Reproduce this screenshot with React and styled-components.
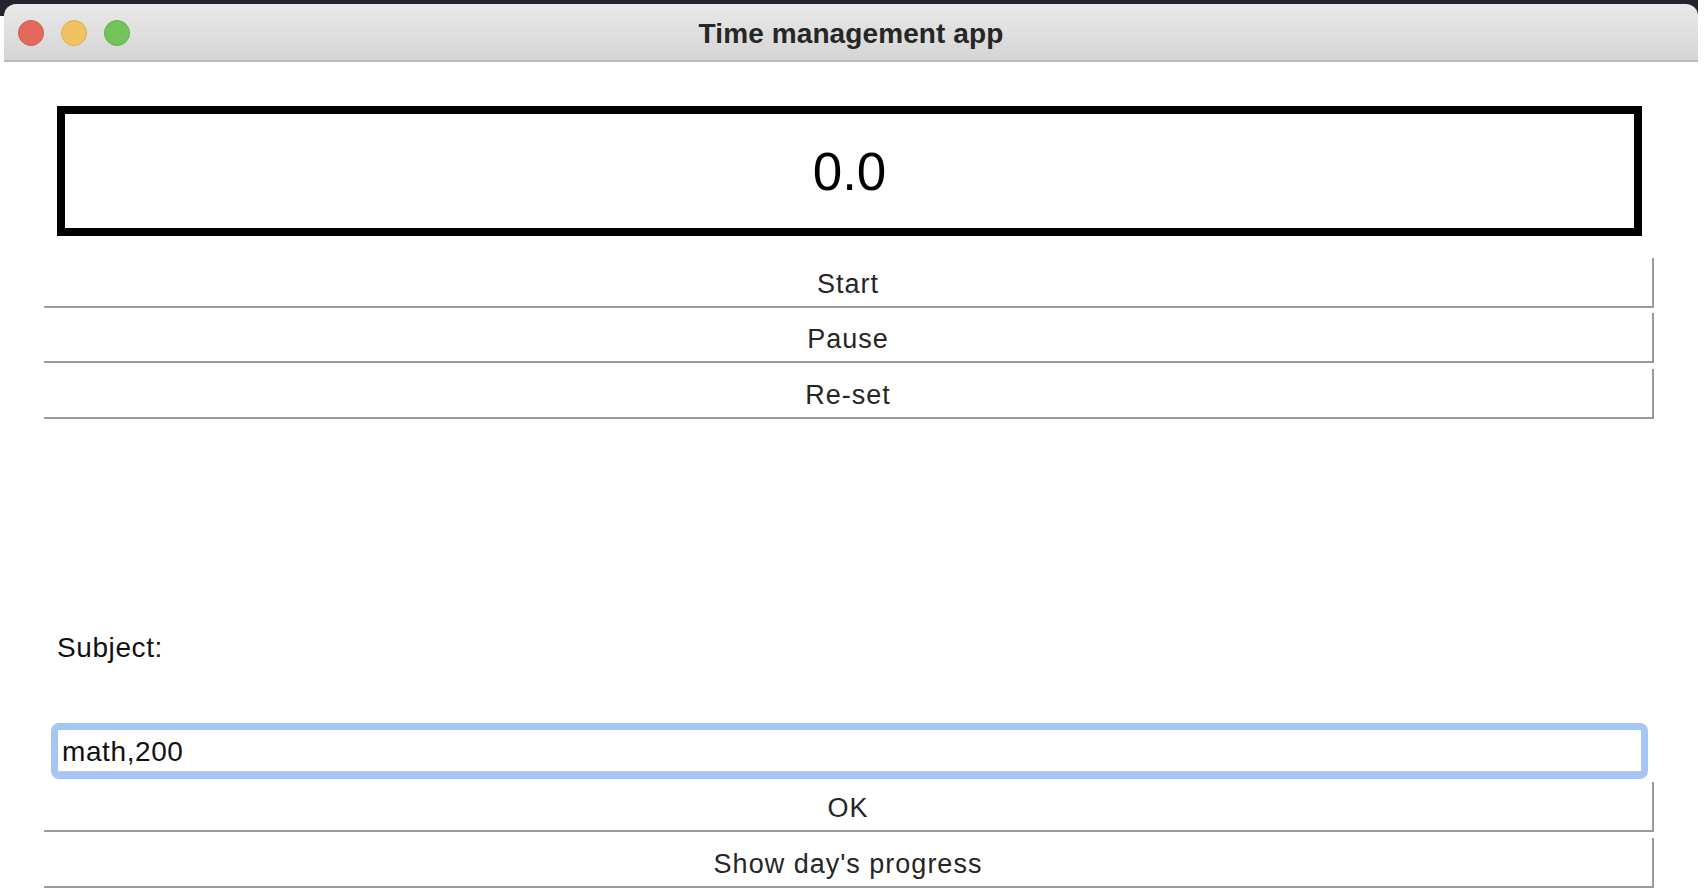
import React, { useState } from "react";
import styled, { createGlobalStyle } from "styled-components";

const GlobalStyle = createGlobalStyle`
  html, body {
    margin: 0;
    padding: 0;
    background: #ffffff;
    overflow: hidden;
  }
  body {
    font-family: "Liberation Sans", Arial, sans-serif;
  }
`;

const Screen = styled.div`
  width: 1704px;
  height: 890px;
  background: #ffffff;
  display: flex;
  flex-direction: column;
`;

const Desktop = styled.div`
  width: 1698px;
  padding: 4px 0 0 4px;
  box-sizing: border-box;
  background: linear-gradient(#25232b 0 16px, #ffffff 16px);
`;

const TitleBar = styled.div`
  height: 58px;
  box-sizing: border-box;
  border-radius: 12px 12px 0 0;
  border-bottom: 2px solid #bcbcbc;
  background: linear-gradient(#e9e9e9, #d5d5d5);
  display: grid;
  grid-template-columns: 1fr auto 1fr;
  align-items: center;
  padding: 0 14px;
`;

const Lights = styled.div`
  display: flex;
  gap: 17px;
  margin-top: 2px;
`;

const Light = styled.span`
  width: 26px;
  height: 26px;
  border-radius: 50%;
  box-sizing: border-box;
  background: ${(p) => p.$color};
  border: 1px solid ${(p) => p.$edge};
`;

const Title = styled.h1`
  margin: 3px 0 0;
  font-size: 28px;
  font-weight: bold;
  color: #262626;
  letter-spacing: 0.1px;
`;

const Content = styled.div`
  display: flex;
  flex-direction: column;
  padding: 0 50px 0 44px;
`;

const TimerBox = styled.div`
  margin: 44px 12px 0 13px;
  height: 130px;
  box-sizing: border-box;
  border: 8px solid #000000;
  display: flex;
  align-items: center;
  justify-content: center;
  font-size: 53px;
  color: #000000;
`;

const ActionButton = styled.button`
  display: block;
  width: 100%;
  height: 50px;
  margin-top: ${(p) => p.$gap}px;
  padding: 4px 0 0;
  box-sizing: border-box;
  background: #ffffff;
  border: none;
  border-bottom: 2px solid #9b9b9b;
  border-right: 2px solid #9b9b9b;
  font-family: "Liberation Sans", Arial, sans-serif;
  font-size: 27px;
  letter-spacing: 1px;
  color: #262626;
  cursor: pointer;
`;

const Label = styled.div`
  margin: 212px 0 0 13px;
  font-size: 28px;
  line-height: 34px;
  letter-spacing: 0.6px;
  color: #111111;
`;

const Field = styled.input`
  margin: 58px 6px 0 7px;
  height: 56px;
  box-sizing: border-box;
  border: 7px solid #a5c5f5;
  border-radius: 8px;
  box-shadow: inset 0 -1px 0 #c8c8c8;
  padding: 2px 4px 0;
  outline: none;
  font-family: "Liberation Sans", Arial, sans-serif;
  font-size: 28px;
  letter-spacing: 0.6px;
  color: #111111;
  background: #ffffff;
`;

export default function App() {
  const [subject, setSubject] = useState("math,200");

  return (
    <>
      <GlobalStyle />
      <Screen>
        <Desktop>
          <TitleBar>
            <Lights>
              <Light $color="#e2695c" $edge="#d0584c" />
              <Light $color="#f0c262" $edge="#dcae52" />
              <Light $color="#72c35a" $edge="#62b04c" />
            </Lights>
            <Title>Time management app</Title>
            <span />
          </TitleBar>
        </Desktop>
        <Content>
          <TimerBox>0.0</TimerBox>
          <ActionButton $gap={22}>Start</ActionButton>
          <ActionButton $gap={5}>Pause</ActionButton>
          <ActionButton $gap={6}>Re-set</ActionButton>
          <Label>Subject:</Label>
          <Field value={subject} onChange={(e) => setSubject(e.target.value)} />
          <ActionButton $gap={3}>OK</ActionButton>
          <ActionButton $gap={6}>Show day's progress</ActionButton>
        </Content>
      </Screen>
    </>
  );
}
